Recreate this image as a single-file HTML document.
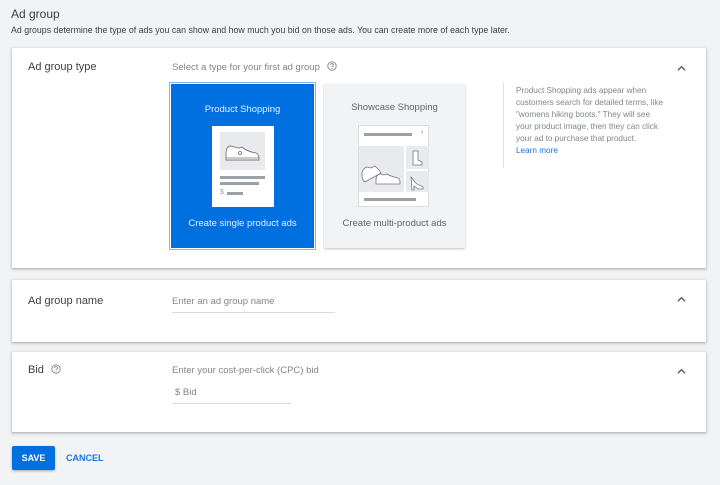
<!DOCTYPE html>
<html><head><meta charset="utf-8"><style>
*{box-sizing:border-box;margin:0;padding:0}
body{width:720px;height:485px;background:#f1f3f4;font-family:"Liberation Sans",sans-serif;color:#3c4043;position:relative;overflow:hidden}
.abs{position:absolute}
.card{position:absolute;left:12px;width:694px;background:#fff;box-shadow:0 1px 2px rgba(60,64,67,.3),0 1px 3px 1px rgba(60,64,67,.12)}
.lbl{position:absolute;left:16px;font-size:11px;color:#3c4043}
.chev{position:absolute;right:20px;width:9px;height:9px}
.gray{color:#80868b}
</style></head><body>
<div class="abs" style="left:11px;top:7px;font-size:12px;color:#3c4043">Ad group</div>
<div class="abs" style="left:11px;top:25px;font-size:8.8px;color:#3c4043">Ad groups determine the type of ads you can show and how much you bid on those ads. You can create more of each type later.</div>

<div class="card" style="top:48px;height:220px">
  <div class="lbl" style="top:13px">Ad group type</div>
  <div class="abs gray" style="left:160px;top:13px;font-size:9.5px">Select a type for your first ad group
    <svg width="10" height="10" viewBox="0 0 10 10" style="vertical-align:-1px;margin-left:4px"><circle cx="5" cy="5" r="4.2" fill="none" stroke="#80868b" stroke-width=".9"/><path d="M3.6 4a1.4 1.4 0 1 1 1.9 1.2c-.4.2-.5.5-.5.9" fill="none" stroke="#80868b" stroke-width=".9"/><circle cx="5" cy="7.4" r=".5" fill="#80868b"/></svg></div>
  <svg class="chev" style="top:16px" viewBox="0 0 10 10"><path d="M1 7L5 3L9 7" fill="none" stroke="#5f6368" stroke-width="1.6"/></svg>

  <div class="abs" style="left:157px;top:34px;width:147px;height:168px;border:1px solid #8ab4f8;padding:1px"><div style="width:100%;height:100%;background:#0070e0;position:relative">
    <div class="abs" style="top:20px;width:100%;text-align:center;color:#e8f0fe;font-size:9.5px">Product Shopping</div>
    <div class="abs" style="left:41px;top:42px;width:62px;height:81px;background:#fff">
      <div class="abs" style="left:8px;top:6px;width:45px;height:38px;background:#e8eaed">
        <svg width="45" height="38" viewBox="0 0 45 38"><path d="M6 22c0-5 2-8 4-8 3 0 6 2 9 2l3-1c3 3 8 5 14 6 2 1 3 3 3 5v2H6z" fill="#fff" stroke="#777" stroke-width=".9"/><circle cx="20" cy="21" r="1.6" fill="none" stroke="#777" stroke-width=".8"/><path d="M6 26h33" stroke="#777" stroke-width=".8"/></svg>
      </div>
      <div class="abs" style="left:8px;top:50px;width:45px;height:3px;background:#9aa0a6"></div>
      <div class="abs" style="left:8px;top:56px;width:39px;height:3px;background:#9aa0a6"></div>
      <div class="abs" style="left:8px;top:63px;font-size:7px;color:#9aa0a6">$</div>
      <div class="abs" style="left:15px;top:66px;width:16px;height:2.5px;background:#9aa0a6"></div>
    </div>
    <div class="abs" style="top:134px;width:100%;text-align:center;color:#e8f0fe;font-size:9.5px">Create single product ads</div>
  </div></div>

  <div class="abs" style="left:312px;top:36px;width:141px;height:164px;background:#f1f3f4;box-shadow:0 1px 2px rgba(0,0,0,.25)">
    <div class="abs" style="top:18px;width:100%;text-align:center;color:#5f6368;font-size:9.5px">Showcase Shopping</div>
    <div class="abs" style="left:34px;top:41px;width:71px;height:82px;background:#fff;border:1px solid #dadce0">
      <div class="abs" style="left:5px;top:7px;width:48px;height:3px;background:#9aa0a6"></div>
      <div class="abs" style="left:62px;top:3px;font-size:7px;color:#777">›</div>
      <div class="abs" style="left:0;top:20px;width:45px;height:46px;background:#e8eaed">
        <svg width="45" height="46" viewBox="0 0 45 46"><path d="M3 28c0-4 3-7 5-7l4 1 4-2c3 3 5 5 6 7l-16 9c-3-2-3-5-3-8z" fill="#fff" stroke="#777" stroke-width=".8"/><path d="M17 34c0-4 2-6 4-6l4 1 3-1c3 2 7 3 11 4 2 1 2 3 2 4v2H17z" fill="#fff" stroke="#777" stroke-width=".8"/></svg>
      </div>
      <div class="abs" style="left:47px;top:20px;width:23px;height:23px;background:#e8eaed"><svg width="23" height="23" viewBox="0 0 23 23"><path d="M7 5h5v9l4 2v3H7z" fill="#fff" stroke="#777" stroke-width=".8"/></svg></div>
      <div class="abs" style="left:47px;top:45px;width:23px;height:21px;background:#e8eaed"><svg width="23" height="21" viewBox="0 0 23 21"><path d="M5 6c2 2 4 7 8 8l4 2v2h-5l-4-3v4H6z" fill="#fff" stroke="#777" stroke-width=".8"/></svg></div>
      <div class="abs" style="left:5px;top:72px;width:52px;height:2.5px;background:#9aa0a6"></div>
    </div>
    <div class="abs" style="top:134px;width:100%;text-align:center;color:#5f6368;font-size:9.5px">Create multi-product ads</div>
  </div>

  <div class="abs" style="left:491px;top:34px;height:86px;border-left:1px solid #e0e0e0"></div>
  <div class="abs gray" style="left:504px;top:37px;width:152px;font-size:8.2px;line-height:12px">Product Shopping ads appear when customers search for detailed terms, like "womens hiking boots." They will see your product image, then they can click your ad to purchase that product.<br><span style="color:#1a73e8">Learn more</span></div>
</div>

<div class="card" style="top:280px;height:62px">
  <div class="lbl" style="top:15px">Ad group name</div>
  <div class="abs gray" style="left:160px;top:16px;font-size:9.5px">Enter an ad group name</div>
  <div class="abs" style="left:160px;top:32px;width:163px;border-top:1px solid #dadce0"></div>
  <svg class="chev" style="top:15px" viewBox="0 0 10 10"><path d="M1 7L5 3L9 7" fill="none" stroke="#5f6368" stroke-width="1.6"/></svg>
</div>

<div class="card" style="top:352px;height:80px">
  <div class="lbl" style="top:12px">Bid <svg width="10" height="10" viewBox="0 0 10 10" style="vertical-align:-1px;margin-left:4px"><circle cx="5" cy="5" r="4.2" fill="none" stroke="#80868b" stroke-width=".9"/><path d="M3.6 4a1.4 1.4 0 1 1 1.9 1.2c-.4.2-.5.5-.5.9" fill="none" stroke="#80868b" stroke-width=".9"/><circle cx="5" cy="7.4" r=".5" fill="#80868b"/></svg></div>
  <div class="abs gray" style="left:160px;top:13px;font-size:9.5px">Enter your cost-per-click (CPC) bid</div>
  <div class="abs gray" style="left:163px;top:35px;font-size:9.5px">$ Bid</div>
  <div class="abs" style="left:160px;top:51px;width:119px;border-top:1px solid #dadce0"></div>
  <svg class="chev" style="top:15px" viewBox="0 0 10 10"><path d="M1 7L5 3L9 7" fill="none" stroke="#5f6368" stroke-width="1.6"/></svg>
</div>

<div class="abs" style="left:12px;top:446px;width:43px;height:24px;background:#0070e0;border-radius:2px;box-shadow:0 1px 2px rgba(0,0,0,.3);color:#fff;font-size:9px;font-weight:bold;text-align:center;line-height:24px">SAVE</div>
<div class="abs" style="left:66px;top:446px;height:24px;line-height:24px;color:#1a73e8;font-size:9px;font-weight:bold">CANCEL</div>
</body></html>
